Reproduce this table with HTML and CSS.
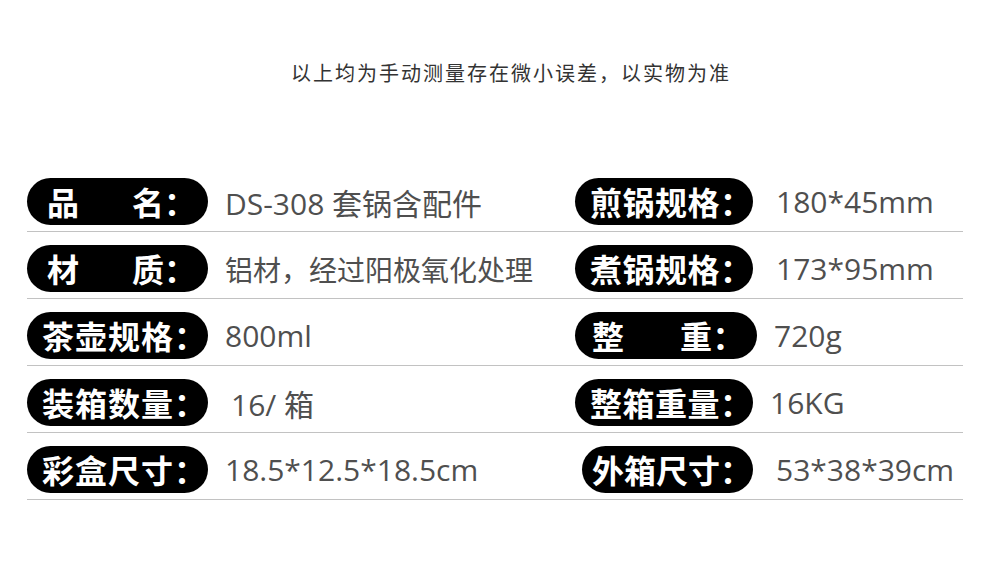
FILE: index.html
```html
<!DOCTYPE html>
<html lang="zh-CN">
<head>
  <meta charset="UTF-8" />
  <title>产品参数</title>
  <link rel="stylesheet" href="styles.css">
</head>
<body>
  <p class="note">以上均为手动测量存在微小误差，以实物为准</p>

  <div class="specs">
    <div class="row">
      <div class="cell">
        <span class="tag spread"><span>品</span><span>名：</span></span>
        <span class="val">DS-308 套锅含配件</span>
      </div>
      <div class="cell">
        <span class="tag">煎锅规格：</span>
        <span class="val">180*45mm</span>
      </div>
    </div>

    <div class="row">
      <div class="cell">
        <span class="tag spread"><span>材</span><span>质：</span></span>
        <span class="val cjk">铝材，经过阳极氧化处理</span>
      </div>
      <div class="cell">
        <span class="tag">煮锅规格：</span>
        <span class="val">173*95mm</span>
      </div>
    </div>

    <div class="row">
      <div class="cell">
        <span class="tag">茶壶规格：</span>
        <span class="val">800ml</span>
      </div>
      <div class="cell">
        <span class="tag spread wide"><span>整</span><span>重：</span></span>
        <span class="val near">720g</span>
      </div>
    </div>

    <div class="row">
      <div class="cell">
        <span class="tag">装箱数量：</span>
        <span class="val far">16/ 箱</span>
      </div>
      <div class="cell">
        <span class="tag">整箱重量：</span>
        <span class="val near">16KG</span>
      </div>
    </div>

    <div class="row">
      <div class="cell">
        <span class="tag">彩盒尺寸：</span>
        <span class="val">18.5*12.5*18.5cm</span>
      </div>
      <div class="cell">
        <span class="tag shift">外箱尺寸：</span>
        <span class="val">53*38*39cm</span>
      </div>
    </div>
  </div>
</body>
</html>
```

FILE: styles.css
```css
body {
  margin: 0;
  background: #fff;
  font-family: "Noto Sans CJK SC", "Noto Sans", sans-serif;
}
.note {
  margin: 0;
  padding: 58px 0 0 22px;
  height: 178px;
  box-sizing: border-box;
  text-align: center;
  font-size: 20px;
  letter-spacing: 2px;
  color: #333;
}
.specs {
  margin-left: 27px;
  width: 936px;
}
.row {
  display: flex;
  align-items: center;
  padding-bottom: 6px;
  margin-bottom: 13px;
  border-bottom: 1px solid #c2c2c2;
}
.row:last-child {
  margin-bottom: 0;
}
.cell {
  display: flex;
  align-items: center;
}
.cell:first-child {
  width: 548px;
}
.tag {
  display: inline-flex;
  align-items: center;
  box-sizing: border-box;
  width: 181px;
  height: 47px;
  padding: 0 0 2px 15px;
  border-radius: 24px;
  background: #000;
  color: #fff;
  font-weight: 700;
  font-size: 32px;
  letter-spacing: 1px;
  white-space: nowrap;
}
.cell:last-child .tag {
  width: 178px;
  letter-spacing: 0.5px;
}
.tag.spread {
  justify-content: space-between;
  padding-left: 20px;
  padding-right: 12px;
  letter-spacing: 0;
}
.cell:last-child .tag.wide {
  width: 182px;
  padding-left: 17px;
}
.cell:last-child .tag.shift {
  width: 171px;
  margin-left: 7px;
  padding-left: 10px;
  letter-spacing: 0;
}
.val {
  margin-left: 17px;
  font-family: "Open Sans", "Noto Sans CJK SC", sans-serif;
  font-size: 30px;
  color: #4f4f4f;
  white-space: nowrap;
}
.val.cjk {
  font-size: 28px;
}
.cell:last-child .val {
  margin-left: 23px;
}
.val.far {
  margin-left: 23px;
}
.cell:last-child .val.near {
  margin-left: 17px;
}
```
